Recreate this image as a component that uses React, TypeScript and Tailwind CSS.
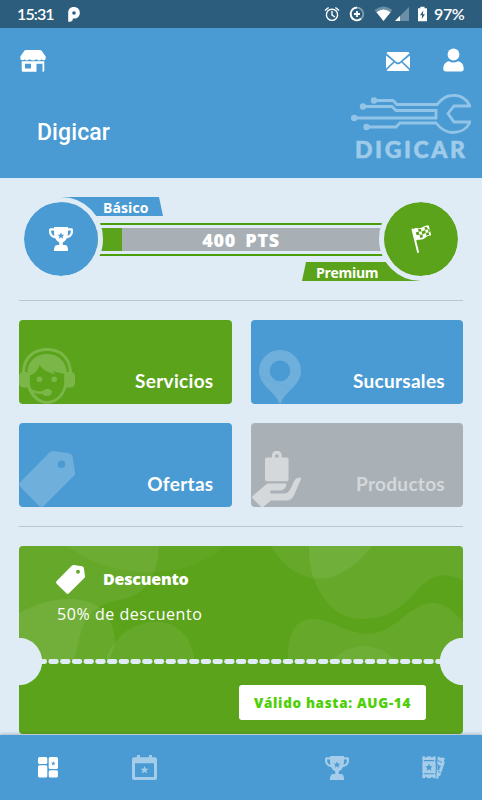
import React from "react";

const STAR = "M0 -4 L1.2 -1.3 L4 -1.2 L1.8 .6 L2.6 3.4 L0 1.8 L-2.6 3.4 L-1.8 .6 L-4 -1.2 L-1.2 -1.3 Z";

const Star = ({ x, y, s = 1, className = "fill-[#4a9bd3]" }: { x: number; y: number; s?: number; className?: string }) => (
  <path className={className} transform={`translate(${x} ${y}) scale(${s})`} d={STAR} />
);

const Trophy = ({ className = "" }: { className?: string }) => (
  <svg viewBox="0 0 24 24" className={className}>
    <path
      fill="currentColor"
      fillRule="evenodd"
      d="M5 0H19V1.2H22.5Q24 1.2 24 2.7V4.5C24 8.4 21.4 10.7 17.8 11.2C16.7 13.7 15.2 14.8 13.8 15.2V18H15.8C17.5 18 18.7 19.2 18.7 21V21.5H19V24H5V21.5H5.3C5.3 19.2 6.5 18 8.2 18H10.2V15.2C8.8 14.8 7.3 13.7 6.2 11.2C2.6 10.7 0 8.4 0 4.5V2.7Q0 1.2 1.5 1.2H5ZM2.2 3.5V4.5C2.2 6.9 3.4 8.2 5.5 8.8C5 7.2 5 5.3 5 3.5ZM19 3.5C19 5.3 19 7.2 18.5 8.8C20.6 8.2 21.8 6.9 21.8 4.5V3.5Z"
    />
    <Star x={12} y={8.8} s={0.85} />
  </svg>
);

const Tag = ({ className = "" }: { className?: string }) => (
  <svg viewBox="0 0 56 56" className={className}>
    <path
      fill="currentColor"
      fillRule="evenodd"
      d="M30.5 1.5Q32 0 34.5 0L50 2.2Q53 2.8 53.6 5.5L56 21.5Q56.3 23.5 54.8 25L25 54.7Q22.5 57 20 54.7L1.3 36Q-1 33.6 1.3 31ZM42.5 9.4A3.8 3.8 0 1 0 42.5 17A3.8 3.8 0 1 0 42.5 9.4Z"
    />
  </svg>
);

const Headset = () => (
  <svg viewBox="0 0 56 56" className="w-14 h-14" fill="currentColor">
    <path
      fillRule="evenodd"
      d="M28 0C42 0 52.5 8.8 53 24C55 24.8 56 26 56 28V35C56 38 53.8 39.6 50.5 39.6H47.5C45.2 48 37.5 56 28 56C18.5 56 10.8 48 8.5 39.6H5.5C2.2 39.6 0 38 0 35V28C0 26 1 24.8 3 24C3.5 8.8 14 0 28 0ZM28 3C15 3 6.8 10.5 6 24H8.2C9.2 13 17 6 28 6C39 6 46.8 13 47.8 24H50C49.2 10.5 41 3 28 3ZM20.7 17C18.5 23 15.5 26.2 10.8 27.2V34C10.8 37 11.6 39.2 12.7 41.5C15 42 17.2 43.1 19.2 43.2C21 43.2 22.5 43.4 23.8 43.2C24.8 41.4 27.2 41.1 28.5 41.1C31.6 41.1 33 42.7 33 44.5C33 46.3 31 48 28 48C25.8 48 24.2 47 23.4 45.7C20.5 46.4 17.5 45.6 15 44.7C18 49.7 23 53 28 53C37.5 53 45.2 44 45.2 34V26C40.5 24.7 36 24.2 33.8 22.8L36.2 26C29 24.6 23.2 21.5 20.7 17Z"
    />
    <circle cx="20.5" cy="31.3" r="2.9" />
    <circle cx="35.2" cy="31.3" r="2.9" />
  </svg>
);

const Pin = () => (
  <svg viewBox="0 0 42 54" className="w-[42px] h-[54px]">
    <path
      fill="currentColor"
      fillRule="evenodd"
      d="M21 0A21 21 0 0 1 42 21C42 36 25 42 22 53Q21 55 20 53C17 42 0 36 0 21A21 21 0 0 1 21 0ZM21 10.6A10.3 10.3 0 1 0 21 31.2A10.3 10.3 0 1 0 21 10.6Z"
    />
    <path d="M1 26 31 39" stroke="#4a9bd3" strokeWidth=".5" opacity=".35" />
  </svg>
);

const HandBag = () => (
  <svg viewBox="0 0 49 56" className="w-[49px] h-14" fill="currentColor">
    <path
      fillRule="evenodd"
      d="M15 6.5H20V4.5A4.8 4.8 0 0 1 29.7 4.5V6.5H35Q36.5 6.5 36.5 8V28.7Q36.5 30.3 35 30.3H14.6Q13 30.3 13 28.7V8Q13 6.5 15 6.5ZM23 6.5H26.7V5A1.8 1.8 0 0 0 23 5Z"
    />
    <path d="M.6 45 13.7 33.8Q15.2 32.5 17.3 32.5H33.2Q34.8 32.5 34.3 34.2C33.2 38 31 39.6 28 39.6H19.5Q18.2 39.6 18.2 41Q18.2 42.5 19.5 42.5H31.8C35 42.5 37 41 38.6 37.8L42 30.3Q44.3 26 48.5 26.5Q49.3 27 48.8 28.5L42 44.2Q39.5 49.5 34 49.5H19L11.8 55.4Q10 56.8 8.4 55.2L.4 47.2Q-.5 46 .6 45Z" />
  </svg>
);

const StoreIcon = () => (
  <svg viewBox="0 0 26 22" className="w-[26px] h-[22px]">
    <path fill="#fff" d="M4.5.5Q5 0 6 0H20Q21 0 21.5.5L25.7 6.5V8Q25.7 10.2 23.8 10.2Q22 10.2 21.5 9.2Q20.5 10.4 19 10.4Q17.5 10.4 16.6 9.3Q15 10.4 13 10.4Q11 10.4 9.4 9.3Q8.5 10.4 7 10.4Q5.5 10.4 4.5 9.2Q4 10.2 2.2 10.2Q.3 10.2.3 8V6.5Z" />
    <path fill="#fff" fillRule="evenodd" d="M1.7 11.2H24.3V20.5Q24.3 21.8 23 21.8H22.5V13.8H16.5V21.8H3Q1.7 21.8 1.7 20.5ZM5 13.8V18.4H11V13.8Z" />
  </svg>
);

const MailIcon = () => (
  <svg viewBox="0 0 24 19" className="w-6 h-[19px]" fill="#fff">
    <path d="M1.5 0H22.5L23.5 1.2L14 9.7Q12 11.3 10 9.7L.5 1.2Z" />
    <path d="M0 3.5 7.4 9.5 0 16.4ZM24 3.5 16.6 9.5 24 16.4Z" />
    <path d="M8.6 10.6 10 11.7Q12 13 14 11.7L15.4 10.6 23.4 18.2Q23 19 22 19H2Q1 19 .6 18.2Z" />
  </svg>
);

const FlagIcon = () => (
  <svg viewBox="0 0 20 28" className="w-5 h-7">
    <path d="M1.5 4.5 7 27" stroke="#fff" strokeWidth="1.9" strokeLinecap="round" />
    <path fill="#fff" d="M2 4.2C6 1.2 7.5 4.7 11 2.5C13 1 15 .5 17.8 .5L20.3 10.6C16 10.2 15 13 12.3 14C8.8 15.4 7 13.8 5 15.8Z" />
    <g fill="#5ba31a">
      <path d="M7 4 10 4 10.6 6.6 7.7 6.8ZM13.4 2.3 16 1.9 16.8 4.4 14.1 5ZM4.8 7.3 7.7 6.8 8.5 9.8 5.6 10.3ZM10.6 6.6 14.1 5 14.8 8 11.4 9.4ZM16.8 4.4 18.3 4.1 19 7 17.6 7.2ZM8.5 9.8 11.4 9.4 12 12.3 9.2 12.9ZM14.8 8 17.6 7.2 18.2 9.7 15.5 10.7Z" />
    </g>
  </svg>
);

const Logo = () => (
  <svg viewBox="0 0 120 68" className="w-[120px] h-[68px] text-[#92c4e7]">
    <g fill="none" stroke="currentColor" strokeWidth="2.8">
      <path d="M23 6.5H42L46 10.5H86C91 4.5 96 1.5 101 1.5C109 .5 116 5 119 12H103L97 19.5L103 28H119C116 35 109 38.5 102 38.5C95 38.5 89 34 85 29H49L45 33H16" />
      <path d="M12 12.5H41L45 16.5H85V24H3" />
    </g>
    <g fill="currentColor">
      <circle cx="23" cy="6.5" r="3.2" />
      <circle cx="12" cy="12.5" r="3.2" />
      <circle cx="3.2" cy="24" r="3.2" />
      <circle cx="15.5" cy="33" r="3.2" />
    </g>
    <text x="4" y="64" fontSize="23" fontWeight="900" textLength="110" fill="#9ecbea" stroke="#9ecbea" strokeWidth=".6" className="font-['Lato',sans-serif]">
      DIGICAR
    </text>
  </svg>
);

const StatusBar = () => (
  <div className="h-7 bg-[#2d5d7c] flex items-center justify-between pl-[17px] pr-[17px] text-white font-['Lato',sans-serif] text-[16px] font-semibold">
    <div className="flex items-center">
      <span className="w-[51px] tracking-[-0.9px]">15:31</span>
      <svg viewBox="0 0 12 15" className="w-3 h-[15px]">
        <path fill="#fff" fillRule="evenodd" d="M5.7 0A5.7 5.7 0 0 1 11.8 6C11.8 9.4 9.4 11.6 6.3 11.6H4.8V12C4.8 14 3.5 14.7 2 14.7H.2V5.5C.2 2.2 2.5 0 5.7 0ZM6 4.2A1.8 1.8 0 1 0 6 7.8A1.8 1.8 0 1 0 6 4.2Z" />
      </svg>
    </div>
    <div className="flex items-center">
      <svg viewBox="0 0 104 16" className="w-[104px] h-4" fill="none" stroke="#fff" strokeWidth="1.4">
        <circle cx="8" cy="8.8" r="5.6" />
        <path d="M1 4.5 4.6 1.5M15 4.5 11.4 1.5M8 5V9.2L11 11" />
        <circle cx="33" cy="8" r="6.3" opacity=".4" strokeWidth="1.8" />
        <path d="M33 1.7A6.3 6.3 0 1 0 37 12.8M33 5V11M30 8H36" strokeWidth="1.8" />
        <path d="M50.5 4Q59.5 -3 68.5 4L59.5 15Z" fill="#6d8fa5" stroke="none" />
        <path d="M52.5 6.2Q59.5 1 66.5 6.2L59.5 15Z" fill="#fff" stroke="none" />
        <path d="M85 1V15H71Z" fill="#6d8fa5" stroke="none" />
        <path d="M76 10V15H71Z" fill="#fff" stroke="none" />
        <path d="M94 2.2H96.3V.8H100.5V2.2H103V15.2H94Z" fill="#fff" stroke="none" />
        <path d="M99.3 4.5 96 9.2H98.1L97.7 13 101 8.2H98.9Z" fill="#2d5d7c" stroke="none" />
      </svg>
      <span className="ml-1.5 w-[31px] tracking-[-0.4px] whitespace-nowrap">97%</span>
    </div>
  </div>
);

const Header = () => (
  <header className="h-[150px] bg-[#4a9bd3] flex flex-col">
    <div className="h-[66px] flex items-center justify-between pl-5 pr-[18px]">
      <StoreIcon />
      <div className="flex items-center gap-[33px]">
        <MailIcon />
        <svg viewBox="0 0 22 24" className="w-[21px] h-6 -mt-[3px]" fill="#fff">
          <circle cx="11" cy="6.2" r="6.2" />
          <path d="M.3 21.5C.3 16.5 3 14 6.2 13.4Q11 16 15.8 13.4C19 14 21.7 16.5 21.7 21.5Q21.7 24 19.5 24H2.5Q.3 24 .3 21.5Z" />
        </svg>
      </div>
    </div>
    <div className="flex justify-between pl-[37px] pr-[11px]">
      <h1 className="font-['Roboto',sans-serif] font-medium text-[23px] leading-7 text-white mt-[25px] tracking-[0.1px]">Digicar</h1>
      <Logo />
    </div>
  </header>
);

const Levels = () => (
  <section className="h-[122px] px-[19px] flex items-center relative text-white">
    <div className="absolute left-[61px] top-[19px] w-[102px] h-[19px] bg-[#4a9bd3] [clip-path:polygon(0_0,98px_0,100%_100%,0_100%)] pl-[42px] text-[14px] leading-[21px] font-bold tracking-[0.1px]">
      Básico
    </div>
    <div className="absolute left-[302px] top-[84px] w-[119px] h-[19px] bg-[#5ba31a] [clip-path:polygon(4px_0,100%_0,100%_100%,0_100%)] pl-[14px] text-[14px] leading-[21px] font-bold tracking-[-0.3px]">
      Premium
    </div>
    <div className="relative z-10 shrink-0 size-[84px] rounded-full border-5 border-[#dfecf6] bg-[#4a9bd3] bg-clip-padding flex items-center justify-center">
      <Trophy className="size-6" />
    </div>
    <div className="flex-1 -mx-[6px] border-y-2 border-[#4a9f08] py-[3px]">
      <div className="h-[23px] bg-[#a8b0b6] flex relative">
        <div className="w-[25px] bg-[#5ba31a]" />
        <span className="absolute inset-0 text-center text-[18px] leading-[24px] font-extrabold tracking-[0.7px] [word-spacing:4px]">400 PTS</span>
      </div>
    </div>
    <div className="relative z-10 shrink-0 size-[84px] rounded-full border-5 border-[#dfecf6] bg-[#5ba31a] bg-clip-padding flex items-center justify-center">
      <FlagIcon />
    </div>
  </section>
);

const cards = [
  { label: "Servicios", bg: "bg-[#5ba31a]", text: "text-white", icon: <Headset />, tone: "pl-0 text-[#7ab648]" },
  { label: "Sucursales", bg: "bg-[#4a9bd3]", text: "text-white", icon: <Pin />, tone: "pl-2 text-[#6fafdc]" },
  { label: "Ofertas", bg: "bg-[#4a9bd3]", text: "text-white", icon: <Tag className="size-14" />, tone: "pl-0 text-[#6fafdc]" },
  { label: "Productos", bg: "bg-[#a9b0b6]", text: "text-[#d4d8db]", icon: <HandBag />, tone: "pl-px text-[#d4d8db]" },
];

const Coupon = () => (
  <section className="mx-[19px] mt-[19px] h-[188px] rounded-[4px] bg-[#5ba31a] overflow-hidden relative text-white">
    <svg viewBox="0 0 444 114" className="absolute inset-x-0 top-0 w-full h-[114px]" fill="#fff">
      <path opacity=".07" d="M0 0H140C139 27 129 48 104 53C62 61 64 80 55 114H0Z" />
      <path opacity=".04" d="M48 0C92 34 167 36 205 0ZM93 0Q110 5 127 0Z" />
      <path opacity=".08" d="M0 67C34 48 84 44 94 83C99 97 93 105 90 114H0Z" />
      <path opacity=".07" d="M87 114C102 65 171 61 175 114Z" />
      <path opacity=".07" d="M252 0C277 42 319 45 353 0Z" />
      <path opacity=".07" d="M290 0H444V34C395 12 403 73 342 73C309 73 288 34 290 0Z" />
      <path opacity=".07" d="M269 114C268 85 278 71 298 73C320 76 342 98 369 82C394 68 411 37 444 76V114Z" />
      <path opacity=".06" d="M313 114Q344 86 377 114Z" />
    </svg>
    <div className="relative pt-[18px] pl-[37px]">
      <div className="flex items-center h-[30px]">
        <Tag className="size-[29px]" />
        <h2 className="ml-[18px] text-[16px] font-extrabold tracking-[-0.2px]">Descuento</h2>
      </div>
      <p className="text-[16px] leading-6 mt-[8px] pl-px tracking-[0.55px]">50% de descuento</p>
    </div>
    <svg viewBox="0 0 444 47" className="absolute inset-x-0 top-[92px] w-full h-[47px]" fill="#dfecf6">
      <circle cx="-.5" cy="23.5" r="23.7" />
      <circle cx="444.5" cy="23.5" r="23.7" />
      <path d="M20 23.5H424" stroke="#dfecf6" strokeWidth="4.8" strokeLinecap="round" strokeDasharray="5.7 6.02" />
    </svg>
    <div className="absolute right-[37px] top-[139px] w-[187px] h-[35px] rounded-[3px] bg-white text-[#50cf09] text-center text-[13.5px] leading-[36px] font-extrabold tracking-[0.65px]">
      Válido hasta: AUG-14
    </div>
  </section>
);

const BottomNav = () => (
  <nav className="mt-px h-[65px] bg-[#4a9bd3] flex items-center text-[#a5cde9] shadow-[0_-1px_3px_rgba(60,80,100,0.35)] relative">
    <div className="flex-1 flex justify-center">
      <svg viewBox="0 0 20 21" className="w-5 h-[21px]" fill="#fff">
        <rect width="9.3" height="7" rx="1.5" />
        <rect y="8.3" width="9.3" height="12.2" rx="1.5" />
        <rect x="10.7" width="9.3" height="12" rx="1.5" />
        <rect x="10.7" y="13.3" width="9.3" height="7.2" rx="1.5" />
        <Star x={15.3} y={6.4} s={0.55} />
      </svg>
    </div>
    <div className="flex-1 flex justify-center">
      <svg viewBox="0 0 25 25" className="size-[25px]" fill="currentColor">
        <path fillRule="evenodd" d="M5 0H8V2.2H17V0H20V2.2H23Q25 2.2 25 4.2V23Q25 25 23 25H2Q0 25 0 23V4.2Q0 2.2 2 2.2H5ZM3 8.2V22H22V8.2Z" />
        <Star x={12.5} y={15} className="fill-current" />
      </svg>
    </div>
    <div className="flex-1" />
    <div className="flex-1 flex justify-center">
      <Trophy className="size-6" />
    </div>
    <div className="flex-1 flex justify-center">
      <svg viewBox="0 0 23 23" className="size-[23px]" fill="currentColor">
        <path d="M15.8 1 17 .5Q18 2.6 20.2 1.2L23 2.6Q21.2 4.8 22.8 6.5L18.3 19.5Q16 20 16.4 22.3L14 23Z" />
        <path d="M15.8 4.5 20 6.5M16 15.5 18.5 16.5" stroke="#4a9bd3" />
        <path fill="#4a9bd3" d="M15.5 7.5 17.5 9.8 19.2 10 17.5 12 17.4 14 15.5 14.5Z" />
        <path stroke="#4a9bd3" strokeWidth=".7" d="M0 0H2.5Q4 2.7 5.5 0H8.5Q10 2.7 11.5 0H14V4Q12.7 5 14 6V17Q12.7 18 14 19V22.5H11.5Q10 20 8.5 22.5H5.5Q4 20 2.5 22.5H0V19Q1.2 18 0 17V6Q1.2 5 0 4Z" />
        <path d="M2 4.6H12M2 17.8H12" stroke="#4a9bd3" strokeWidth="1.1" />
        <Star x={7} y={11.5} s={0.95} />
      </svg>
    </div>
  </nav>
);

const App = () => {
  return (
    <div className="w-[482px] h-[800px] overflow-hidden bg-[#dfecf6] font-['Open_Sans',sans-serif]">
      <StatusBar />
      <Header />
      <Levels />
      <hr className="mx-[19px] border-t border-[#b8c6d1]" />
      <div className="grid grid-cols-2 gap-[19px] px-[19px] py-[19px]">
        {cards.map((card) => (
          <div key={card.label} className={`h-[84px] rounded-[4px] overflow-hidden flex items-end justify-between pr-[18px] ${card.bg}`}>
            <div className={card.tone}>{card.icon}</div>
            <span className={`font-['Lato',sans-serif] font-bold text-[19px] leading-7 mb-[9px] tracking-[0.3px] ${card.text}`}>{card.label}</span>
          </div>
        ))}
      </div>
      <hr className="mx-[19px] border-t border-[#b8c6d1]" />
      <Coupon />
      <BottomNav />
    </div>
  );
};

export default App;
